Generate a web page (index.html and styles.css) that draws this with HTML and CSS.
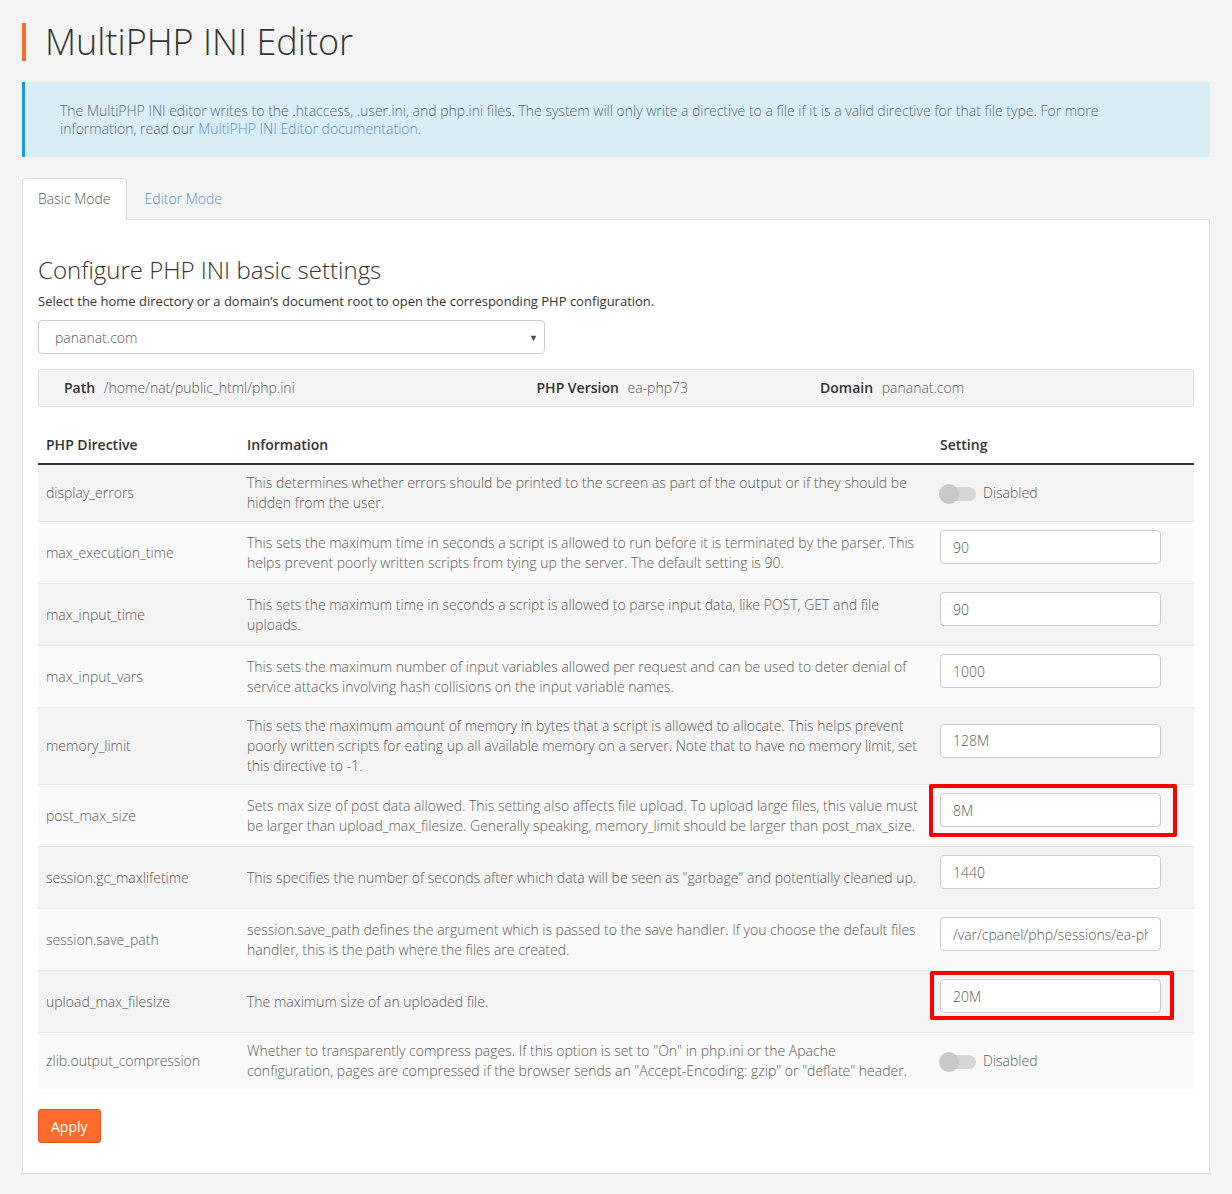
FILE: index.html
```html
<!DOCTYPE html>
<html>
<head>
<meta charset="utf-8">
<title>MultiPHP INI Editor</title>
<link rel="stylesheet" href="styles.css">
</head>
<body>
<div class="page">
	<h1 class="page-title">MultiPHP INI Editor</h1>

	<div class="callout">
		<p>The MultiPHP INI editor writes to the .htaccess, .user.ini, and php.ini files. The system will only write a directive to a file if it is a valid directive for that file type. For more information, read our <a href="#">MultiPHP INI Editor documentation</a>.</p>
	</div>

	<ul class="tabs">
		<li class="active"><a href="#">Basic Mode</a></li>
		<li><a href="#">Editor Mode</a></li>
	</ul>

	<div class="panel">
		<h2>Configure PHP INI basic settings</h2>
		<p class="help">Select the home directory or a domain’s document root to open the corresponding PHP configuration.</p>

		<div class="select">
			<span>pananat.com</span>
			<span class="caret">▼</span>
		</div>

		<div class="infobar">
			<div><b>Path</b> /home/nat/public_html/php.ini</div>
			<div><b>PHP Version</b> ea-php73</div>
			<div><b>Domain</b> pananat.com</div>
		</div>

		<table class="directives">
			<thead>
				<tr>
					<th class="c-name">PHP Directive</th>
					<th class="c-info">Information</th>
					<th class="c-set">Setting</th>
				</tr>
			</thead>
			<tbody>
				<tr>
					<td>display_errors</td>
					<td>This determines whether errors should be printed to the screen as part of the output or if they should be hidden from the user.</td>
					<td><span class="toggle"><span class="knob"></span></span><span class="toggle-label">Disabled</span></td>
				</tr>
				<tr>
					<td>max_execution_time</td>
					<td>This sets the maximum time in seconds a script is allowed to run before it is terminated by the parser. This helps prevent poorly written scripts from tying up the server. The default setting is 90.</td>
					<td><div class="field"><input type="text" value="90"></div></td>
				</tr>
				<tr>
					<td>max_input_time</td>
					<td>This sets the maximum time in seconds a script is allowed to parse input data, like POST, GET and file uploads.</td>
					<td><div class="field"><input type="text" value="90"></div></td>
				</tr>
				<tr>
					<td>max_input_vars</td>
					<td>This sets the maximum number of input variables allowed per request and can be used to deter denial of service attacks involving hash collisions on the input variable names.</td>
					<td><div class="field"><input type="text" value="1000"></div></td>
				</tr>
				<tr>
					<td>memory_limit</td>
					<td>This sets the maximum amount of memory in bytes that a script is allowed to allocate. This helps prevent poorly written scripts for eating up all available memory on a server. Note that to have no memory limit, set this directive to -1.</td>
					<td><div class="field"><input type="text" value="128M"></div></td>
				</tr>
				<tr>
					<td>post_max_size</td>
					<td>Sets max size of post data allowed. This setting also affects file upload. To upload large files, this value must be larger than upload_max_filesize. Generally speaking, memory_limit should be larger than post_max_size.</td>
					<td><div class="field"><input type="text" value="8M"><span class="mark mark-a"></span></div></td>
				</tr>
				<tr>
					<td>session.gc_maxlifetime</td>
					<td>This specifies the number of seconds after which data will be seen as "garbage" and potentially cleaned up.</td>
					<td><div class="field"><input type="text" value="1440"></div></td>
				</tr>
				<tr>
					<td>session.save_path</td>
					<td>session.save_path defines the argument which is passed to the save handler. If you choose the default files handler, this is the path where the files are created.</td>
					<td><div class="field"><input type="text" value="/var/cpanel/php/sessions/ea-php73"></div></td>
				</tr>
				<tr>
					<td>upload_max_filesize</td>
					<td>The maximum size of an uploaded file.</td>
					<td><div class="field"><input type="text" value="20M"><span class="mark mark-b"></span></div></td>
				</tr>
				<tr>
					<td>zlib.output_compression</td>
					<td>Whether to transparently compress pages. If this option is set to "On" in php.ini or the Apache configuration, pages are compressed if the browser sends an "Accept-Encoding: gzip" or "deflate" header.</td>
					<td><span class="toggle"><span class="knob"></span></span><span class="toggle-label">Disabled</span></td>
				</tr>
			</tbody>
		</table>

		<button type="button" class="btn-apply">Apply</button>
	</div>
</div>
</body>
</html>
```

FILE: styles.css
```css
*{
	box-sizing: border-box;
	margin: 0;
	padding: 0;
}

body{
	background: #f4f4f4;
	font-family: "Open Sans", "Liberation Sans", sans-serif;
	font-size: 14px;
	font-weight: 300;
	color: #595959;
}

.page{
	padding: 23px 22px 20px;
}

a{
	color: #5a8dc9;
	text-decoration: none;
}

.page-title{
	border-left: 4px solid #ff6c2c;
	padding-left: 19px;
	font-size: 36px;
	font-weight: 300;
	line-height: 38px;
	color: #333;
}

.callout{
	margin-top: 21px;
	background: #d9edf7;
	border-left: 3px solid #1a9bd7;
	padding: 20px 80px 19px 35px;
	line-height: 18px;
	color: #5b6a75;
}

.tabs{
	list-style: none;
	display: flex;
	gap: 2px;
	margin-top: 21px;
}

.tabs li a{
	display: block;
	padding: 10px 15px;
	line-height: 20px;
	border: 1px solid transparent;
	border-bottom: 0;
	border-radius: 4px 4px 0 0;
}

.tabs li.active a{
	background: #fff;
	border-color: #ddd;
	color: #595959;
	margin-bottom: -1px;
	padding-bottom: 11px;
}

.panel{
	background: #fff;
	border: 1px solid #ddd;
	padding: 16px 15px 30px;
}

.panel h2{
	margin-top: 20px;
	font-size: 24px;
	font-weight: 300;
	line-height: 28px;
	color: #333;
}

.help{
	margin-top: 7px;
	font-size: 13px;
	font-weight: 400;
	line-height: 20px;
	color: #333;
}

.select{
	margin-top: 9px;
	width: 507px;
	height: 34px;
	border: 1px solid #ccc;
	border-radius: 4px;
	display: flex;
	align-items: center;
	justify-content: space-between;
	padding: 0 6px 0 16px;
}

.select .caret{
	font-size: 9px;
	color: #444;
}

.infobar{
	margin-top: 15px;
	background: #f4f4f4;
	border: 1px solid #ddd;
	border-radius: 3px;
	padding: 8px 10px;
	line-height: 20px;
	display: grid;
	grid-template-columns: 5fr 3fr 4fr;
}

.infobar > div{
	padding: 0 15px;
}

.infobar b{
	font-weight: 600;
	color: #333;
	margin-right: 5px;
}

.directives{
	margin-top: 20px;
	width: 100%;
	border-collapse: collapse;
	line-height: 20px;
}

.directives th{
	text-align: left;
	font-weight: 600;
	color: #333;
	padding: 8px;
	border-bottom: 2px solid #333;
}

.c-name{ width: 201px; }
.c-set{ width: 262px; }

.directives td{
	padding: 8px;
	vertical-align: middle;
	border-top: 1px solid #e6e6e6;
}

.directives tbody tr:nth-child(odd){
	background: #f4f4f4;
}

.directives tbody tr:nth-child(even){
	background: #fafafa;
}

.directives tbody tr:first-child td{
	border-top: 0;
}

.directives td:nth-child(2){
	padding-right: 14px;
}

.field{
	position: relative;
	width: 221px;
	margin-bottom: 11px;
}

.field input{
	display: block;
	width: 100%;
	height: 34px;
	border: 1px solid #ccc;
	border-radius: 4px;
	padding: 0 12px;
	font-family: inherit;
	font-size: 14px;
	font-weight: 300;
	color: #595959;
	background: #fff;
}

.mark{
	position: absolute;
	border: 4px solid #f00;
	border-radius: 2px;
}

.mark-a{
	left: -11px;
	top: -9px;
	right: -16px;
	bottom: -10px;
}

.mark-b{
	left: -10px;
	top: -8px;
	right: -13px;
	bottom: -7px;
}

.toggle{
	display: inline-block;
	vertical-align: middle;
	position: relative;
	width: 36px;
	height: 14px;
	background: #d6d6d6;
	border-radius: 7px;
	margin-right: 7px;
}

.toggle .knob{
	position: absolute;
	left: -1px;
	top: -3px;
	width: 20px;
	height: 20px;
	border-radius: 50%;
	background: #c9c9c9;
}

.toggle-label{
	vertical-align: middle;
}

.btn-apply{
	margin-top: 20px;
	height: 34px;
	padding: 0 12px;
	background: #ff6c2c;
	border: 1px solid #e5521a;
	border-radius: 3px;
	color: #fff;
	font-family: inherit;
	font-size: 14px;
	font-weight: 400;
}
```
